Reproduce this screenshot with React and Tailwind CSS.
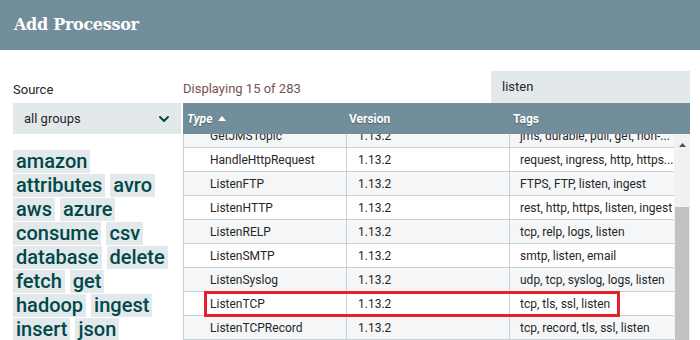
import React from "react";
import { ChevronDown } from "lucide-react";

const tags = [
  "amazon",
  "attributes",
  "avro",
  "aws",
  "azure",
  "consume",
  "csv",
  "database",
  "delete",
  "fetch",
  "get",
  "hadoop",
  "ingest",
  "insert",
  "json",
];

const rows = [
  { type: "GetJMSTopic", version: "1.13.2", tags: "jms, durable, pull, get, non-..." },
  { type: "HandleHttpRequest", version: "1.13.2", tags: "request, ingress, http, https..." },
  { type: "ListenFTP", version: "1.13.2", tags: "FTPS, FTP, listen, ingest" },
  { type: "ListenHTTP", version: "1.13.2", tags: "rest, http, https, listen, ingest" },
  { type: "ListenRELP", version: "1.13.2", tags: "tcp, relp, logs, listen" },
  { type: "ListenSMTP", version: "1.13.2", tags: "smtp, listen, email" },
  { type: "ListenSyslog", version: "1.13.2", tags: "udp, tcp, syslog, logs, listen" },
  { type: "ListenTCP", version: "1.13.2", tags: "tcp, tls, ssl, listen" },
  { type: "ListenTCPRecord", version: "1.13.2", tags: "tcp, record, tls, ssl, listen" },
];

const App = () => {
  return (
    <div className="h-[340px] w-[700px] overflow-hidden bg-white font-['Roboto',sans-serif] text-[13px] text-[#262626]">
      {/* Dialog header */}
      <div className="h-[50px] bg-[#728e9b] pl-[14px] pt-[13px]">
        <h1 className="font-['DejaVu_Serif',serif] text-[16px] font-bold tracking-[-0.3px] text-white">
          Add Processor
        </h1>
      </div>

      <div className="flex pl-[13px] pr-[10px]">
        {/* Left: source + tag cloud */}
        <div className="w-[168px] shrink-0 pt-[32px]">
          <div className="h-[21px] leading-[16px]">Source</div>
          <div className="flex h-[31px] items-center justify-between bg-[#e3e8eb] pl-[11px] pr-[9px]">
            <span>all groups</span>
            <ChevronDown className="h-[16px] w-[16px] text-[#004849]" strokeWidth={3} />
          </div>
          <div className="mt-[16px] flex flex-wrap gap-x-[5px] gap-y-[1px]">
            {tags.map((t) => (
              <span
                key={t}
                className="h-[23px] bg-[#e3e8eb] px-[3px] text-[20px] leading-[23px] font-medium text-[#004849]"
              >
                {t}
              </span>
            ))}
          </div>
        </div>

        {/* Right: processor table */}
        <div className="ml-[2px] flex-1">
          <div className="flex h-[53px] items-end justify-between pt-[21px]">
            <div className="pb-[5px] text-[#775351]">Displaying 15 of 283</div>
            <div className="flex h-[32px] w-[199px] items-center bg-[#e3e8eb] pl-[11px]">
              listen
            </div>
          </div>

          <div className="grid h-[31px] grid-cols-[163px_163px_1fr] items-center bg-[#728e9b] text-[12px] font-bold text-white [text-shadow:0_1px_1px_rgba(0,0,0,0.35)]">
            <div className="flex items-center gap-[6px] pl-[4px]">
              <span className="italic">Type</span>
              <svg width="8" height="5" viewBox="0 0 8 5">
                <path d="M0 5 L4 0 L8 5 Z" fill="#ffffff" />
              </svg>
            </div>
            <div className="pl-[3px]">Version</div>
            <div className="pl-[4px]">Tags</div>
          </div>

          <div className="flex">
            <div className="relative w-[491px] overflow-hidden border-l border-[#c7d2d7] text-[12px]">
              <div className="-mt-[10px]">
                {rows.map((r, i) => (
                  <div
                    key={r.type}
                    className={`grid h-[24px] grid-cols-[162px_163px_1fr] items-center border-b border-[#c7d2d7] ${
                      i % 2 === 0 ? "bg-[#f4f6f7]" : "bg-white"
                    }`}
                  >
                    <div className="truncate pl-[26px]">{r.type}</div>
                    <div className="flex h-full items-center border-l border-[#c7d2d7] pl-[11px]">
                      {r.version}
                    </div>
                    <div className="flex h-full min-w-0 items-center overflow-hidden whitespace-nowrap border-l border-[#c7d2d7] pl-[10px]">
                      {r.tags}
                    </div>
                  </div>
                ))}
              </div>
              {/* highlight around ListenTCP */}
              <div className="absolute left-[20px] top-[157px] h-[26px] w-[416px] border-[3px] border-[#e4202a]" />
            </div>

            {/* scrollbar */}
            <div className="flex h-[206px] w-[16px] flex-col bg-[#f1f1f1]">
              <div className="flex h-[20px] items-center justify-center pt-[2px]">
                <svg width="7" height="4" viewBox="0 0 7 4">
                  <path d="M0 4 L3.5 0 L7 4 Z" fill="#505050" />
                </svg>
              </div>
              <div className="mt-[53px] mx-[1px] flex-1 bg-[#c1c1c1]" />
            </div>
          </div>
        </div>
      </div>
    </div>
  );
};

export default App;
